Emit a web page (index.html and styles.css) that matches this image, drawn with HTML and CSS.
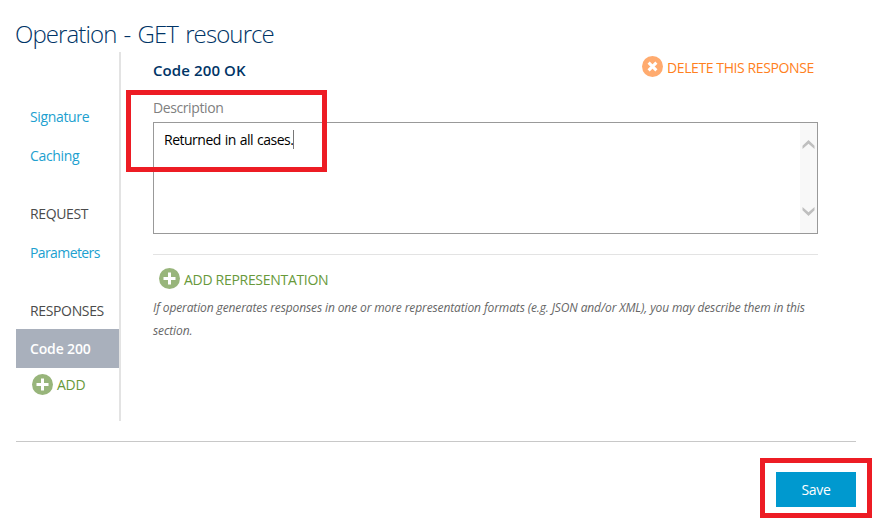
FILE: index.html
```html
<!DOCTYPE html>
<html lang="en">
<head>
<meta charset="utf-8">
<title>Operation - GET resource</title>
<link rel="stylesheet" href="styles.css">
</head>
<body>
<svg class="sprite" aria-hidden="true">
  <symbol id="plus" viewBox="0 0 21 21"><circle cx="10.5" cy="10.5" r="10.5" fill="#98b57b"/><path d="M10.5 4.5v12M4.5 10.5h12" stroke="#fff" stroke-width="3"/></symbol>
  <symbol id="cross" viewBox="0 0 21 21"><circle cx="10.5" cy="10.5" r="10.5" fill="#ffab6f"/><path d="M6.6 6.6l7.8 7.8M14.4 6.6l-7.8 7.8" stroke="#fff" stroke-width="3"/></symbol>
</svg>
<h1><span class="title">Operation - GET resource</span></h1>
<div class="columns">
  <nav>
    <a class="signature">Signature</a>
    <a class="caching">Caching</a>
    <h3 class="request">REQUEST</h3>
    <a class="parameters">Parameters</a>
    <h3 class="responses">RESPONSES</h3>
    <a class="selected"><span>Code 200</span></a>
    <a class="add"><svg class="icon"><use href="#plus"/></svg><span>ADD</span></a>
  </nav>
  <main>
    <header>
      <h2>Code 200 OK</h2>
      <a class="delete"><svg class="icon"><use href="#cross"/></svg><span>DELETE THIS RESPONSE</span></a>
    </header>
    <div class="field">
      <label><span>Description</span></label>
      <div class="textarea">
        <div class="value"><span>Returned in all cases.</span><i class="caret"></i></div>
        <div class="scrollbar">
          <svg width="13" height="10" viewBox="0 0 13 10"><path d="M0.5 9V5.8L6.5 0L12.5 5.8V9L6.5 3.8Z"/></svg>
          <svg width="13" height="10" viewBox="0 0 13 10"><path d="M0.5 1V4.2L6.5 10L12.5 4.2V1L6.5 6.2Z"/></svg>
        </div>
      </div>
      <div class="highlight description-mark"></div>
    </div>
    <section>
      <a class="add-rep"><svg class="icon"><use href="#plus"/></svg><span>ADD REPRESENTATION</span></a>
      <p>If operation generates responses in one or more representation formats (e.g. JSON and/or XML), you may describe them in this<br>section.</p>
    </section>
  </main>
</div>
<footer>
  <div class="save-wrap"><button><span>Save</span></button><div class="highlight save-mark"></div></div>
</footer>
</body>
</html>
```
FILE: styles.css
```css
* { box-sizing: border-box; }
body { margin: 0; width: 880px; height: 530px; background: #fff; font: 14px "Open Sans", "Noto Sans", sans-serif; overflow: hidden; }
.sprite { position: absolute; width: 0; height: 0; }
h1, h2, h3, p { margin: 0; font-weight: 400; }
h1 { height: 52px; padding: 17px 0 0 15px; font-size: 24px; line-height: 34px; font-weight: 300; color: #003466; white-space: nowrap; }
.title { letter-spacing: -0.9px; word-spacing: 1.8px; }
.columns { display: flex; height: 369px; margin-left: 16px; }
nav { display: flex; flex-direction: column; width: 105px; padding-top: 45px; border-right: 2px solid #e3e3e3; }
nav a, nav h3 { height: 39px; padding-left: 14px; font-size: 14px; line-height: 39px; color: #219fcf; letter-spacing: -0.35px; white-space: nowrap; }
nav h3 { margin-top: 19px; color: #4b4b4b; }
nav .parameters { letter-spacing: -0.6px; }
nav .responses { height: 38px; }
nav .selected { background: #a9b0bc; color: #fff; font-weight: 600; letter-spacing: -0.15px; }
.icon { display: block; flex: none; width: 21px; height: 21px; }
nav .add { display: flex; height: 33px; padding: 6px 0 0 16px; color: #68993a; line-height: 21px; letter-spacing: -0.3px; }
.add span, .delete span, .add-rep span { margin-left: 4px; }
main { width: 697px; padding-left: 32px; }
header { display: flex; justify-content: space-between; height: 45px; padding: 4px 3px 0 0; }
h2 { font-size: 15px; line-height: 28px; font-weight: 600; letter-spacing: 0.1px; color: #003466; white-space: nowrap; }
.delete { display: flex; width: 173px; color: #ff8020; line-height: 24px; letter-spacing: -0.4px; white-space: nowrap; }
.field { position: relative; height: 137px; }
label { display: block; height: 25px; line-height: 22px; letter-spacing: -0.4px; color: #808080; }
.textarea { display: flex; justify-content: space-between; height: 112px; border: 1px solid #999; }
.value { display: flex; padding: 7px 0 0 10px; line-height: 20px; letter-spacing: -0.5px; word-spacing: 0.8px; color: #000; white-space: nowrap; }
.caret { width: 1px; height: 19px; background: #777; }
.scrollbar { display: flex; flex-direction: column; justify-content: space-between; width: 17px; padding: 17px 0 17px 2px; background: #f8f8f8; }
.scrollbar path { fill: #bfbfbf; }
.highlight { position: absolute; border: 5px solid #ed1c24; }
.description-mark { left: -27px; top: -7px; width: 201px; height: 82px; }
section { margin-top: 20px; border-top: 1px solid #e3e3e3; }
.add-rep { display: flex; padding: 13px 0 0 6px; color: #68993a; line-height: 23px; letter-spacing: -0.3px; }
section p { margin-top: 5px; font-size: 12px; line-height: 23px; font-style: italic; color: #666; letter-spacing: -0.117px; white-space: nowrap; }
footer { display: flex; justify-content: flex-end; width: 840px; margin: 20px 0 0 16px; padding-top: 30px; border-top: 1px solid #c8c8c8; }
.save-wrap { position: relative; }
button { display: block; width: 80px; height: 35px; padding: 0; border: 0; background: #0099cf; color: #fff; font: 14px/36px "Open Sans", "Noto Sans", sans-serif; letter-spacing: -0.3px; }
.save-mark { left: -16px; top: -14px; width: 112px; height: 60px; }
```
